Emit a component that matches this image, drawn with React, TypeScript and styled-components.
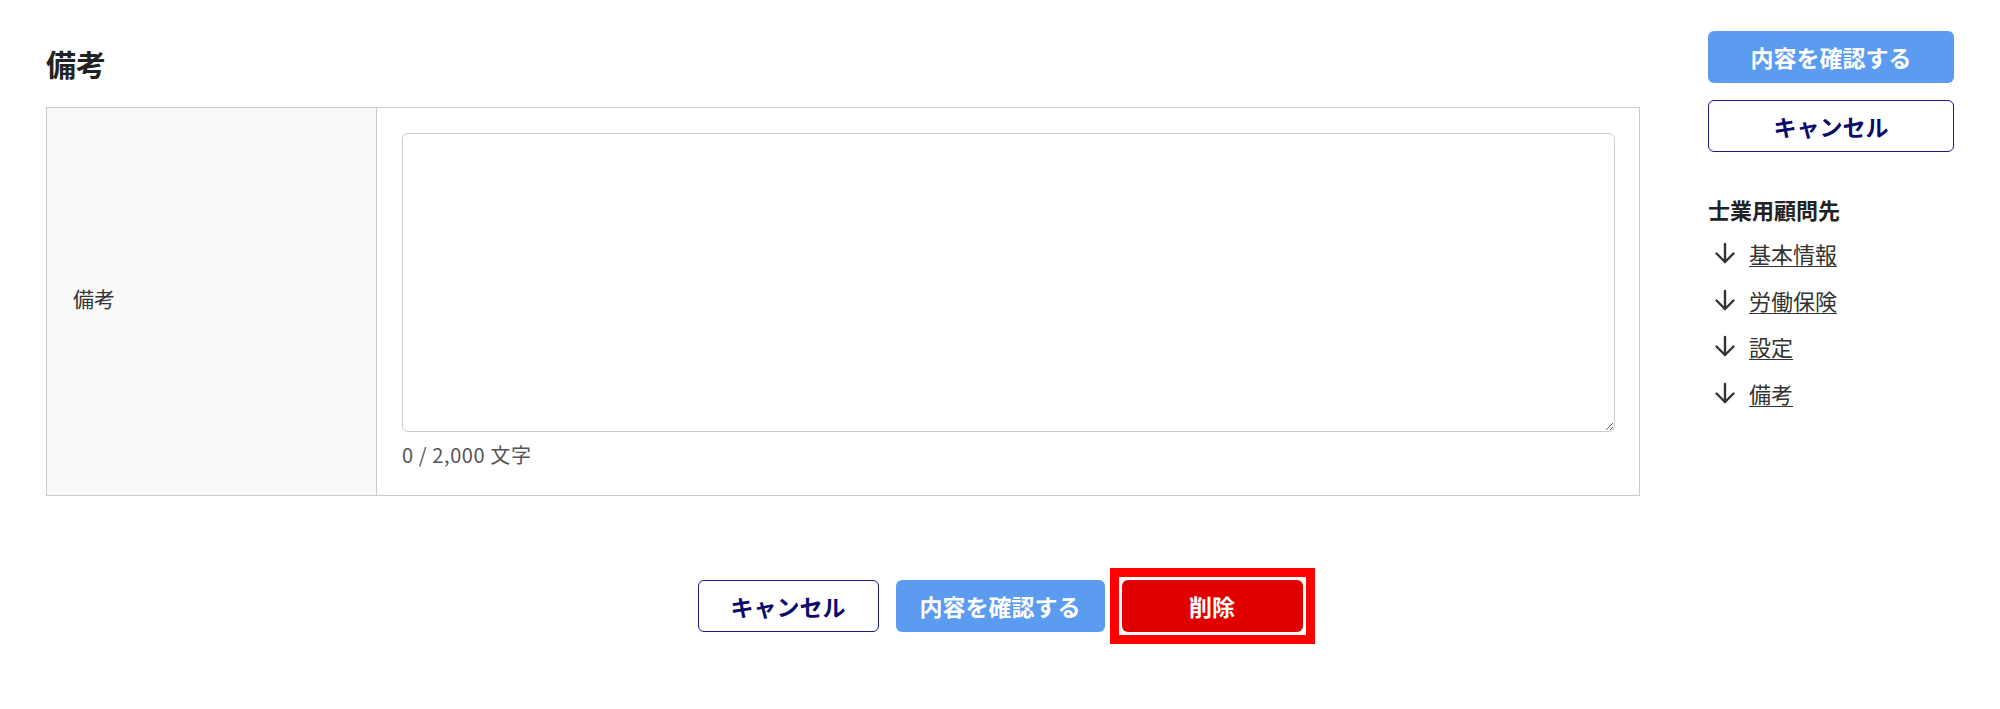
import React, { useState } from "react";
import styled, { createGlobalStyle } from "styled-components";

const GlobalStyle = createGlobalStyle`
  html, body {
    margin: 0;
    padding: 0;
    background: #fff;
  }
  body {
    font-family: "Noto Sans CJK JP", "Noto Sans", sans-serif;
    color: #333;
  }
`

const Page = styled.div`
  width: 2000px;
  box-sizing: border-box;
  padding: 31px 46px 60px;
`

const TopRow = styled.div`
  display: flex;
  align-items: flex-start;
  gap: 68px;
`

const Main = styled.main`
  flex: 1;
  padding-top: 12px;
`

const SectionTitle = styled.h2`
  margin: 0 0 24px;
  font-size: 30px;
  line-height: 40px;
  font-weight: 700;
  color: #222;
`

const FormTable = styled.div`
  display: grid;
  grid-template-columns: 330px 1fr;
  border: 1px solid #ccc;
`

const HeadCell = styled.div`
  display: flex;
  align-items: center;
  padding: 0 0 8px 26px;
  background: #f9f9f9;
  border-right: 1px solid #ccc;
  font-size: 21px;
  color: #333;
`

const BodyCell = styled.div`
  padding: 25px 24px 26px 25px;
`

const TextArea = styled.textarea`
  display: block;
  box-sizing: border-box;
  width: 100%;
  height: 299px;
  border: 1px solid #ccc;
  border-radius: 6px;
  padding: 10px;
  font-family: inherit;
  font-size: 20px;
  resize: vertical;
  outline: none;
`

const Counter = styled.div`
  margin-top: 9px;
  font-size: 20px;
  line-height: 28px;
  color: #555;
  letter-spacing: 0.03em;
`

const Sidebar = styled.aside`
  width: 246px;
  display: flex;
  flex-direction: column;
`

const Button = styled.button<{ $variant: "primary" | "outline" | "danger"; $width?: number }>`
  box-sizing: border-box;
  width: ${p => (p.$width ? `${p.$width}px` : "100%")};
  height: 52px;
  border-radius: 6px;
  font-family: inherit;
  font-size: 23px;
  font-weight: 700;
  cursor: pointer;
  display: flex;
  align-items: center;
  justify-content: center;
  border: ${p => (p.$variant === "outline" ? "1.5px solid #1c1c7c" : "none")};
  background: ${p =>
    p.$variant === "primary" ? "#5b9bf0" : p.$variant === "danger" ? "#e00000" : "#fff"};
  color: ${p => (p.$variant === "outline" ? "#0b0b6b" : "#fff")};
`

const SideButtons = styled.div`
  display: flex;
  flex-direction: column;
  gap: 17px;
`

const NavTitle = styled.div`
  margin-top: 42px;
  font-size: 22px;
  line-height: 30px;
  font-weight: 700;
  color: #222;
`

const NavList = styled.ul`
  list-style: none;
  margin: 6px 0 0;
  padding: 0;
`

const NavItem = styled.li`
  display: flex;
  align-items: center;
  height: 46.5px;
  padding-left: 6px;
  gap: 13px;
`

const NavLink = styled.a`
  font-size: 22px;
  color: #333;
  text-decoration: underline;
  text-underline-offset: 3px;
  text-decoration-thickness: 1px;
  cursor: pointer;
`

const Footer = styled.div`
  display: flex;
  justify-content: center;
  gap: 17px;
  margin-top: 84px;
`

const Highlight = styled.div`
  outline: 9px solid #ff0000;
  outline-offset: 3px;
`

const ArrowDown = () => (
  <svg width="22" height="22" viewBox="0 0 22 22" fill="none" stroke="#333" strokeWidth="2.4" strokeLinecap="round" strokeLinejoin="round">
    <path d="M11 2V20" />
    <path d="M2.5 11.5L11 20L19.5 11.5" />
  </svg>
)

const navItems = ["基本情報", "労働保険", "設定", "備考"]

export default function App() {
  const [note, setNote] = useState("")

  return (
    <>
      <GlobalStyle />
      <Page>
        <TopRow>
          <Main>
            <SectionTitle>備考</SectionTitle>
            <FormTable>
              <HeadCell>備考</HeadCell>
              <BodyCell>
                <TextArea value={note} onChange={e => setNote(e.target.value)} />
                <Counter>{note.length} / 2,000 文字</Counter>
              </BodyCell>
            </FormTable>
          </Main>
          <Sidebar>
            <SideButtons>
              <Button $variant="primary">内容を確認する</Button>
              <Button $variant="outline">キャンセル</Button>
            </SideButtons>
            <NavTitle>士業用顧問先</NavTitle>
            <NavList>
              {navItems.map(item => (
                <NavItem key={item}>
                  <ArrowDown />
                  <NavLink>{item}</NavLink>
                </NavItem>
              ))}
            </NavList>
          </Sidebar>
        </TopRow>
        <Footer>
          <Button $variant="outline" $width={181}>キャンセル</Button>
          <Button $variant="primary" $width={209}>内容を確認する</Button>
          <Highlight>
            <Button $variant="danger" $width={181}>削除</Button>
          </Highlight>
        </Footer>
      </Page>
    </>
  )
}
